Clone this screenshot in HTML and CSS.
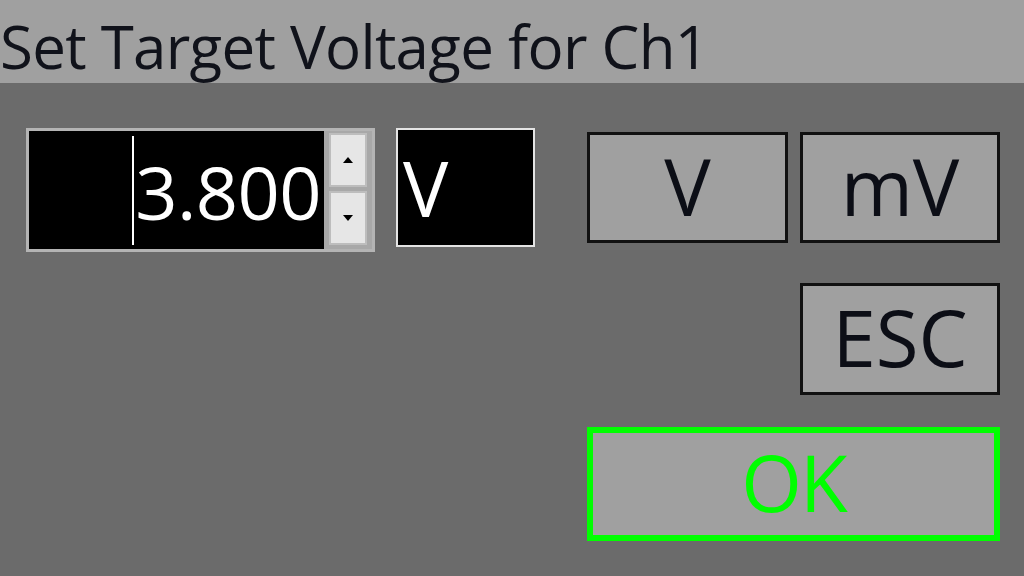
FILE: index.html
```html
<!DOCTYPE html>
<html>
<head>
<meta charset="utf-8">
<link rel="stylesheet" href="styles.css">
</head>
<body>
<div class="dialog">
  <div class="titlebar"><span class="title">Set Target Voltage for Ch1</span></div>
  <div class="content">
    <div class="left">
      <div class="spinbox">
        <div class="field"><span class="caret"></span><span class="value">3.800</span></div>
        <div class="spin">
          <div class="spin-btn"><span class="arrow-up"></span></div>
          <div class="spin-btn"><span class="arrow-down"></span></div>
        </div>
      </div>
      <div class="unit">V</div>
    </div>
    <div class="buttons">
      <div class="btn unitbtn">V</div>
      <div class="btn unitbtn">mV</div>
      <div class="btn esc">ESC</div>
      <div class="btn ok">OK</div>
    </div>
  </div>
</div>
</body>
</html>
```
FILE: styles.css
```css
html, body {
  margin: 0;
  padding: 0;
  width: 1024px;
  height: 576px;
  overflow: hidden;
  background: #6b6b6b;
  font-family: "Open Sans", "Noto Sans", sans-serif;
}
.dialog {
  width: 1024px;
  height: 576px;
  display: flex;
  flex-direction: column;
}
.titlebar {
  height: 83px;
  box-sizing: border-box;
  padding-top: 9px;
  background: #a0a0a0;
}
.title {
  display: block;
  font-size: 60px;
  line-height: 74px;
  color: #10121a;
  letter-spacing: -0.7px;
  white-space: nowrap;
}
.content {
  display: flex;
  padding-top: 45px;
  padding-left: 26px;
}
.left {
  display: flex;
  align-items: flex-start;
  gap: 21px;
}
.spinbox {
  width: 343px;
  height: 118px;
  border: 3px solid #b4b4b4;
  background: #000;
  display: flex;
}
.field {
  flex: 1;
  display: flex;
  align-items: center;
  justify-content: flex-end;
  padding-right: 3px;
}
.caret {
  width: 2px;
  height: 109px;
  background: #fff;
  margin-right: 1px;
}
.value {
  color: #fff;
  font-size: 74px;
  line-height: 1;
  letter-spacing: -0.6px;
  margin-top: 4px;
}
.spin {
  width: 48px;
  background: #a8a8a8;
  display: flex;
  flex-direction: column;
  justify-content: space-between;
  align-items: center;
  padding: 2px 0 4px;
  box-sizing: border-box;
}
.spin-btn {
  width: 34px;
  height: 50px;
  background: #e6e6e6;
  border: 2px solid #bdbdbd;
  display: flex;
  align-items: center;
  justify-content: center;
}
.arrow-up {
  width: 0;
  height: 0;
  border-left: 5px solid transparent;
  border-right: 5px solid transparent;
  border-bottom: 6px solid #000;
}
.arrow-down {
  width: 0;
  height: 0;
  border-left: 5px solid transparent;
  border-right: 5px solid transparent;
  border-top: 6px solid #000;
}
.unit {
  width: 130px;
  height: 115px;
  border: 2px solid #e4e4e4;
  background: #000;
  color: #fff;
  font-size: 76px;
  line-height: 115px;
  padding-left: 5px;
}
.buttons {
  margin-left: 52px;
  margin-top: 4px;
  display: grid;
  grid-template-columns: 201px 200px;
  column-gap: 12px;
  align-items: start;
}
.btn {
  background: #a0a0a0;
  border: 3px solid #111;
  box-sizing: border-box;
  color: #0c0e16;
  font-size: 78px;
  line-height: 1;
  display: flex;
  align-items: center;
  justify-content: center;
  padding-bottom: 4px;
}
.unitbtn {
  height: 111px;
}
.esc {
  grid-column: 2;
  height: 112px;
  margin-top: 40px;
}
.ok {
  grid-column: 1 / span 2;
  height: 114px;
  margin-top: 32px;
  border: 6px solid #00ff00;
  color: #00ff00;
  letter-spacing: -2px;
}
```
